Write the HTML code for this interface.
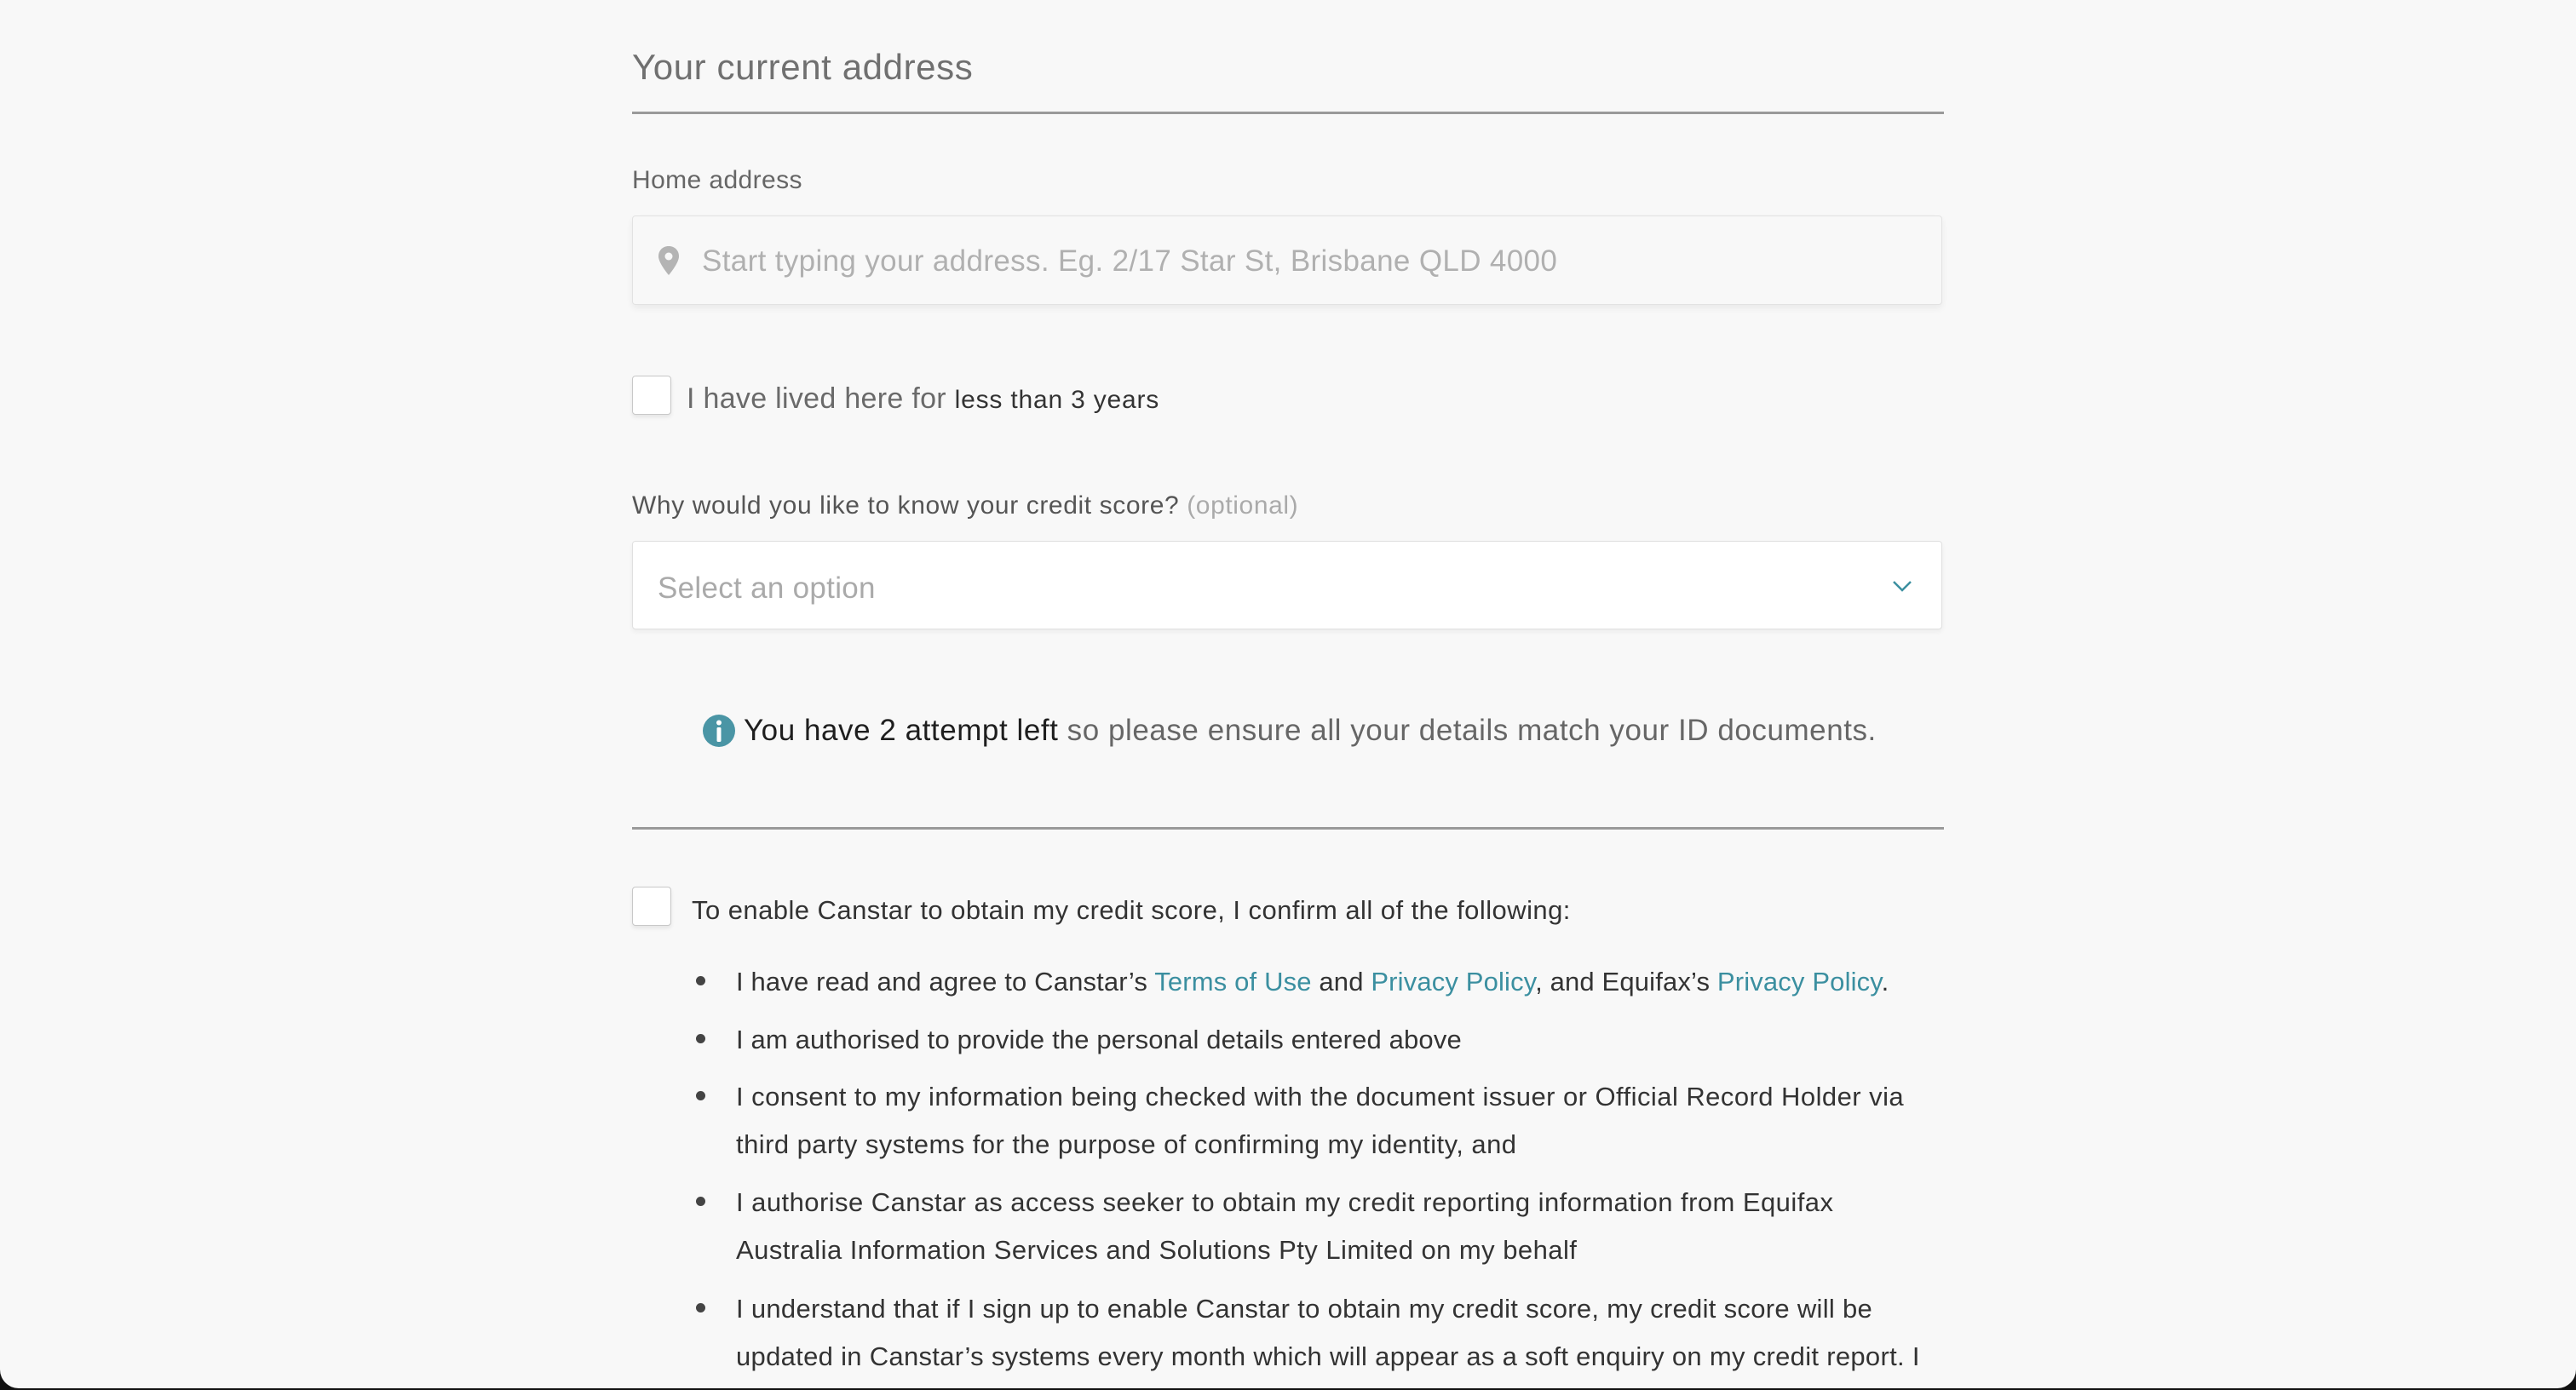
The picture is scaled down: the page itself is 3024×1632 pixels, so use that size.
<!DOCTYPE html>
<html><head><meta charset="utf-8"><style>
html,body{margin:0;padding:0;background:#111;}
.page{position:relative;width:3024px;height:1630px;background:#f8f8f8;border-radius:0 0 22px 22px;overflow:hidden;font-family:"Liberation Sans",sans-serif;}
.a{position:absolute;white-space:nowrap;}
.rule{position:absolute;left:742px;width:1540px;height:3px;background:#9a9a9a;}
.cb{position:absolute;left:742px;width:44px;height:44px;background:#fff;border:1.5px solid #c8c8c8;border-radius:4px;box-shadow:0 3px 5px rgba(0,0,0,0.08);}
.li{position:absolute;left:864px;font-size:31px;color:#333;line-height:56px;letter-spacing:0.15px;}
.dot{position:absolute;left:817px;width:11px;height:11px;border-radius:50%;background:#444;}
a{color:#3b8fa0;text-decoration:none;}
</style></head><body><div class="page">
<div class="a" style="left:742px;top:55px;font-size:42px;color:#707070;letter-spacing:0.6px;">Your current address</div>
<div class="rule" style="top:131px;"></div>
<div class="a" style="left:742px;top:195px;font-size:30px;color:#666;letter-spacing:0.4px;">Home address</div>
<div class="a" style="left:742px;top:253px;width:1536px;height:103px;border:1.5px solid #e2e2e2;border-radius:4px;background:#f8f8f8;box-shadow:0 4px 8px rgba(0,0,0,0.06);"></div>
<svg class="a" style="left:771px;top:288px" width="28" height="36" viewBox="0 0 28 36"><path d="M14 1C7 1 2 6 2 13c0 8 12 22 12 22s12-14 12-22C26 6 21 1 14 1z" fill="#b4b4b4"/><circle cx="14" cy="13" r="4.5" fill="#f8f8f8"/></svg>
<div class="a" style="left:824px;top:287px;font-size:35px;color:#b0b0b0;letter-spacing:0.35px;">Start typing your address. Eg. 2/17 Star St, Brisbane QLD 4000</div>
<div class="cb" style="top:441px;"></div>
<div class="a" style="left:806px;top:449px;font-size:34px;color:#6a6a6a;letter-spacing:0.3px;">I have lived here for <span style="font-size:30px;color:#333;letter-spacing:0.8px;">less than 3 years</span></div>
<div class="a" style="left:742px;top:577px;font-size:30px;color:#555;letter-spacing:0.6px;">Why would you like to know your credit score? <span style="color:#aaa;">(optional)</span></div>
<div class="a" style="left:742px;top:635px;width:1536px;height:102px;border:1.5px solid #e0e0e0;border-radius:4px;background:#fff;box-shadow:0 3px 6px rgba(0,0,0,0.05);"></div>
<div class="a" style="left:772px;top:671px;font-size:35px;color:#aaa;letter-spacing:0.3px;">Select an option</div>
<svg class="a" style="left:2221px;top:680px" width="24" height="16" viewBox="0 0 24 16"><path d="M2 3l10 10 10-10" fill="none" stroke="#3b8fa0" stroke-width="2.5"/></svg>
<svg class="a" style="left:824px;top:838px" width="40" height="40" viewBox="0 0 40 40"><circle cx="20" cy="20" r="19" fill="#4a95a5"/><circle cx="20" cy="10.5" r="3" fill="#fff"/><rect x="17.5" y="16" width="5" height="17" rx="1.5" fill="#fff"/></svg>
<div class="a" style="left:873px;top:838px;font-size:35px;color:#666;letter-spacing:0.55px;"><span style="color:#1e1e1e;">You have 2 attempt left</span> so please ensure all your details match your ID documents.</div>
<div class="rule" style="top:971px;"></div>
<div class="cb" style="top:1041px;"></div>
<div class="a" style="left:812px;top:1051px;font-size:31px;color:#333;letter-spacing:0.45px;">To enable Canstar to obtain my credit score, I confirm all of the following:</div>
<div class="dot" style="top:1146px"></div>
<div class="li" style="top:1125px">I have read and agree to Canstar’s <a>Terms of Use</a> and <a>Privacy Policy</a>, and Equifax’s <a>Privacy Policy</a>.</div>
<div class="dot" style="top:1214px"></div>
<div class="li" style="top:1193px">I am authorised to provide the personal details entered above</div>
<div class="dot" style="top:1281px"></div>
<div class="li" style="top:1260px;letter-spacing:0.45px">I consent to my information being checked with the document issuer or Official Record Holder via<br>third party systems for the purpose of confirming my identity, and</div>
<div class="dot" style="top:1405px"></div>
<div class="li" style="top:1384px;letter-spacing:0.45px">I authorise Canstar as access seeker to obtain my credit reporting information from Equifax<br>Australia Information Services and Solutions Pty Limited on my behalf</div>
<div class="dot" style="top:1530px"></div>
<div class="li" style="top:1509px;letter-spacing:0.3px">I understand that if I sign up to enable Canstar to obtain my credit score, my credit score will be<br>updated in Canstar’s systems every month which will appear as a soft enquiry on my credit report. I</div>
</div></body></html>
